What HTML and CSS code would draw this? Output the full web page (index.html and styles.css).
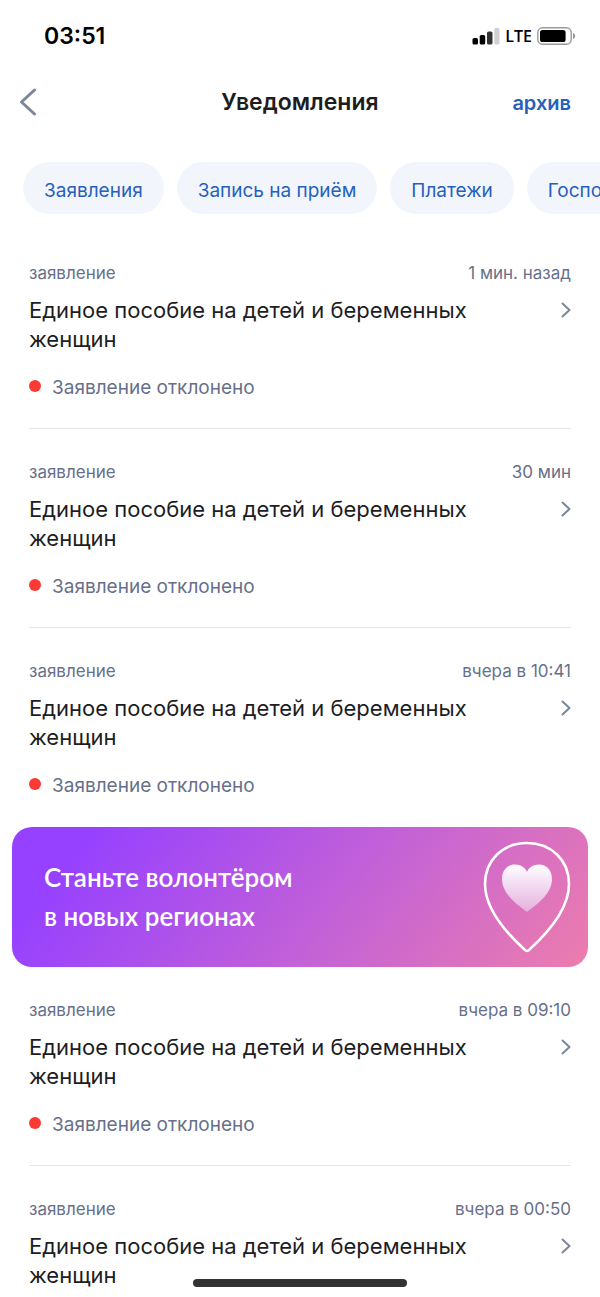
FILE: index.html
```html
<!DOCTYPE html>
<html lang="ru">
<head>
<meta charset="utf-8">
<meta name="viewport" content="width=device-width, initial-scale=1">
<title>Уведомления</title>
<link rel="stylesheet" href="styles.css">
</head>
<body>
<div class="app">
  <div class="status-bar">
    <span class="clock">03:51</span>
    <div class="indicators">
      <svg class="signal" width="28" height="18" viewBox="0 0 28 18" aria-hidden="true">
        <rect x="0.500" y="11" width="5.5" height="6.5" rx="1.6" fill="#000"/>
        <rect x="7.700" y="8" width="5.5" height="9.5" rx="1.6" fill="#000"/>
        <rect x="15" y="4.5" width="5.5" height="13" rx="1.6" fill="#333"/>
        <rect x="22.300" y="1" width="5.200" height="16.5" rx="1.4" fill="#d0d0d0"/>
      </svg>
      <span class="network">LTE</span>
      <svg class="battery" width="39" height="18" viewBox="0 0 39 18" aria-hidden="true">
        <rect x="0.8" y="0.8" width="33.4" height="16.4" rx="4.6" fill="none" stroke="#999" stroke-width="1.4"/>
        <rect x="3" y="3" width="25.6" height="12" rx="2.6" fill="#000"/>
        <path d="M36 6c1.4.6 2.200 1.600 2.200 3s-.8 2.400-2.200 3z" fill="#999"/>
      </svg>
    </div>
  </div>

  <header class="header">
    <button class="back" type="button" aria-label="Назад">
      <svg width="18" height="28" viewBox="0 0 18 28" aria-hidden="true"><path d="M15.500 2L2.500 14l13 12" /></svg>
    </button>
    <h1 class="title">Уведомления</h1>
    <a class="archive" href="#archive">архив</a>
  </header>

  <nav class="filters" aria-label="Фильтры">
    <button class="chip" type="button">Заявления</button>
    <button class="chip" type="button">Запись на приём</button>
    <button class="chip" type="button">Платежи</button>
    <button class="chip" type="button">Госпочта</button>
  </nav>

  <main class="list">
    <a class="item" href="#n1">
      <span class="meta"><span>заявление</span><time>1 мин. назад</time></span>
      <span class="subject">
        <span class="subject-text">Единое пособие на детей и беременных женщин</span>
        <svg class="chevron" width="10" height="16" viewBox="0 0 10 16" aria-hidden="true"><path d="M1.500 1.500L8.500 8l-7 6.500"/></svg>
      </span>
      <span class="state"><span class="dot"></span>Заявление отклонено</span>
    </a>
    <a class="item" href="#n2">
      <span class="meta"><span>заявление</span><time>30 мин</time></span>
      <span class="subject">
        <span class="subject-text">Единое пособие на детей и беременных женщин</span>
        <svg class="chevron" width="10" height="16" viewBox="0 0 10 16" aria-hidden="true"><path d="M1.500 1.500L8.500 8l-7 6.500"/></svg>
      </span>
      <span class="state"><span class="dot"></span>Заявление отклонено</span>
    </a>
    <a class="item item-plain" href="#n3">
      <span class="meta"><span>заявление</span><time>вчера в 10:41</time></span>
      <span class="subject">
        <span class="subject-text">Единое пособие на детей и беременных женщин</span>
        <svg class="chevron" width="10" height="16" viewBox="0 0 10 16" aria-hidden="true"><path d="M1.500 1.500L8.500 8l-7 6.500"/></svg>
      </span>
      <span class="state"><span class="dot"></span>Заявление отклонено</span>
    </a>

    <a class="banner" href="#volunteer">
      <span class="banner-text">Станьте волонтёром<br>в новых регионах</span>
      <svg class="pin" width="88" height="112" viewBox="0 0 88 112" aria-hidden="true">
        <defs>
          <linearGradient id="heart" x1="0" y1="0" x2="0" y2="1">
            <stop offset="0" stop-color="#fff"/>
            <stop offset=".35" stop-color="#f5e2f5"/>
            <stop offset="1" stop-color="#e5b0dc"/>
          </linearGradient>
        </defs>
        <path d="M44 2C20 2 2 19 2 43c0 23 17 45 39.500 65.500Q44 111.500 46.500 108.500C69 88 86 66 86 43 86 19 68 2 44 2z" fill="none" stroke="#fff" stroke-width="2.600"/>
        <path d="M44 31C40 20 19 20 19 38c0 14 13 24 25 33 12-9 25-19 25-33 0-18-21-18-25-7z" fill="url(#heart)"/>
      </svg>
    </a>

    <a class="item" href="#n4">
      <span class="meta"><span>заявление</span><time>вчера в 09:10</time></span>
      <span class="subject">
        <span class="subject-text">Единое пособие на детей и беременных женщин</span>
        <svg class="chevron" width="10" height="16" viewBox="0 0 10 16" aria-hidden="true"><path d="M1.500 1.500L8.500 8l-7 6.500"/></svg>
      </span>
      <span class="state"><span class="dot"></span>Заявление отклонено</span>
    </a>
    <a class="item" href="#n5">
      <span class="meta"><span>заявление</span><time>вчера в 00:50</time></span>
      <span class="subject">
        <span class="subject-text">Единое пособие на детей и беременных женщин</span>
        <svg class="chevron" width="10" height="16" viewBox="0 0 10 16" aria-hidden="true"><path d="M1.500 1.500L8.500 8l-7 6.500"/></svg>
      </span>
    </a>
  </main>
  <div class="home-indicator"></div>
</div>
</body>
</html>
```
FILE: styles.css
```css
* { box-sizing: border-box; }

body {
  margin: 0;
  background: #fff;
  color: #1d1d1f;
  font-family: Inter, "Liberation Sans", sans-serif;
}

a { color: inherit; text-decoration: none; }

button {
  border: 0;
  padding: 0;
  background: none;
  font: inherit;
  cursor: pointer;
}

.app {
  position: relative;
  display: flex;
  flex-direction: column;
  height: 100vh;
  overflow: hidden;
}

.status-bar {
  display: flex;
  flex: none;
  align-items: center;
  justify-content: space-between;
  height: 72px;
  padding: 0 24px 0 44px;
}

.clock {
  color: #000;
  font-size: 23px;
  font-weight: 600;
}

.indicators {
  display: flex;
  align-items: center;
  gap: 5px;
}

.network {
  color: #000;
  font-family: "Open Sans", sans-serif;
  font-size: 16px;
  font-weight: 600;
  line-height: 18px;
}

.header {
  display: grid;
  flex: none;
  grid-template-columns: 1fr auto 1fr;
  align-items: center;
  height: 60px;
  padding: 0 29px;
}

.back {
  justify-self: start;
  display: flex;
  margin-left: -10px;
}

.back path {
  fill: none;
  stroke: #7b8799;
  stroke-width: 3;
  stroke-linecap: round;
  stroke-linejoin: round;
}

.title {
  margin: 0;
  font-size: 23px;
  font-weight: 600;
}

.archive {
  justify-self: end;
  padding-top: 2px;
  color: #2560bd;
  font-size: 20px;
  font-weight: 600;
}

.filters {
  display: flex;
  flex: none;
  gap: 13px;
  padding: 30px 0 16px 23px;
  overflow: hidden;
}

.chip {
  flex: none;
  height: 52px;
  padding: 4px 21px 0;
  border-radius: 26px;
  background: #f2f6fc;
  color: #2560bd;
  font-size: 19px;
}

.list { flex: 1; min-height: 0; overflow: hidden; }

.item {
  display: block;
  margin: 0 29px;
  padding: 32px 0 28px;
  border-bottom: 1px solid #e4e6ea;
}

.item-plain { border-bottom-color: transparent; }

.meta {
  display: flex;
  justify-content: space-between;
  margin-bottom: 12px;
  color: #67708a;
  font-size: 17px;
  line-height: 22px;
}

.subject {
  display: flex;
  align-items: flex-start;
  justify-content: space-between;
  margin-bottom: 22px;
  font-size: 22px;
  line-height: 29px;
}

.subject-text { max-width: 460px; }

.chevron { flex: none; margin-top: 6px; }

.chevron path {
  fill: none;
  stroke: #7b8799;
  stroke-width: 2;
  stroke-linecap: round;
  stroke-linejoin: round;
}

.state {
  display: flex;
  align-items: center;
  gap: 11px;
  color: #67708a;
  font-size: 19px;
  line-height: 24px;
}

.dot {
  width: 12px;
  height: 12px;
  margin-bottom: 4px;
  border-radius: 50%;
  background: #fb3a33;
}

.banner {
  display: flex;
  align-items: center;
  justify-content: space-between;
  height: 140px;
  margin: 0 12px;
  padding: 0 17px 0 32px;
  border-radius: 20px;
  background: linear-gradient(128deg, #9641ff 12%, #c462d6 58%, #ec7dad 100%);
  color: #fff;
}

.banner-text {
  font-family: Lato, sans-serif;
  font-size: 26px;
  font-weight: 600;
  line-height: 39px;
}

.home-indicator {
  position: absolute;
  bottom: 10px;
  left: 50%;
  width: 214px;
  height: 8px;
  margin-left: -107px;
  border-radius: 4px;
  background: #333;
}
```
